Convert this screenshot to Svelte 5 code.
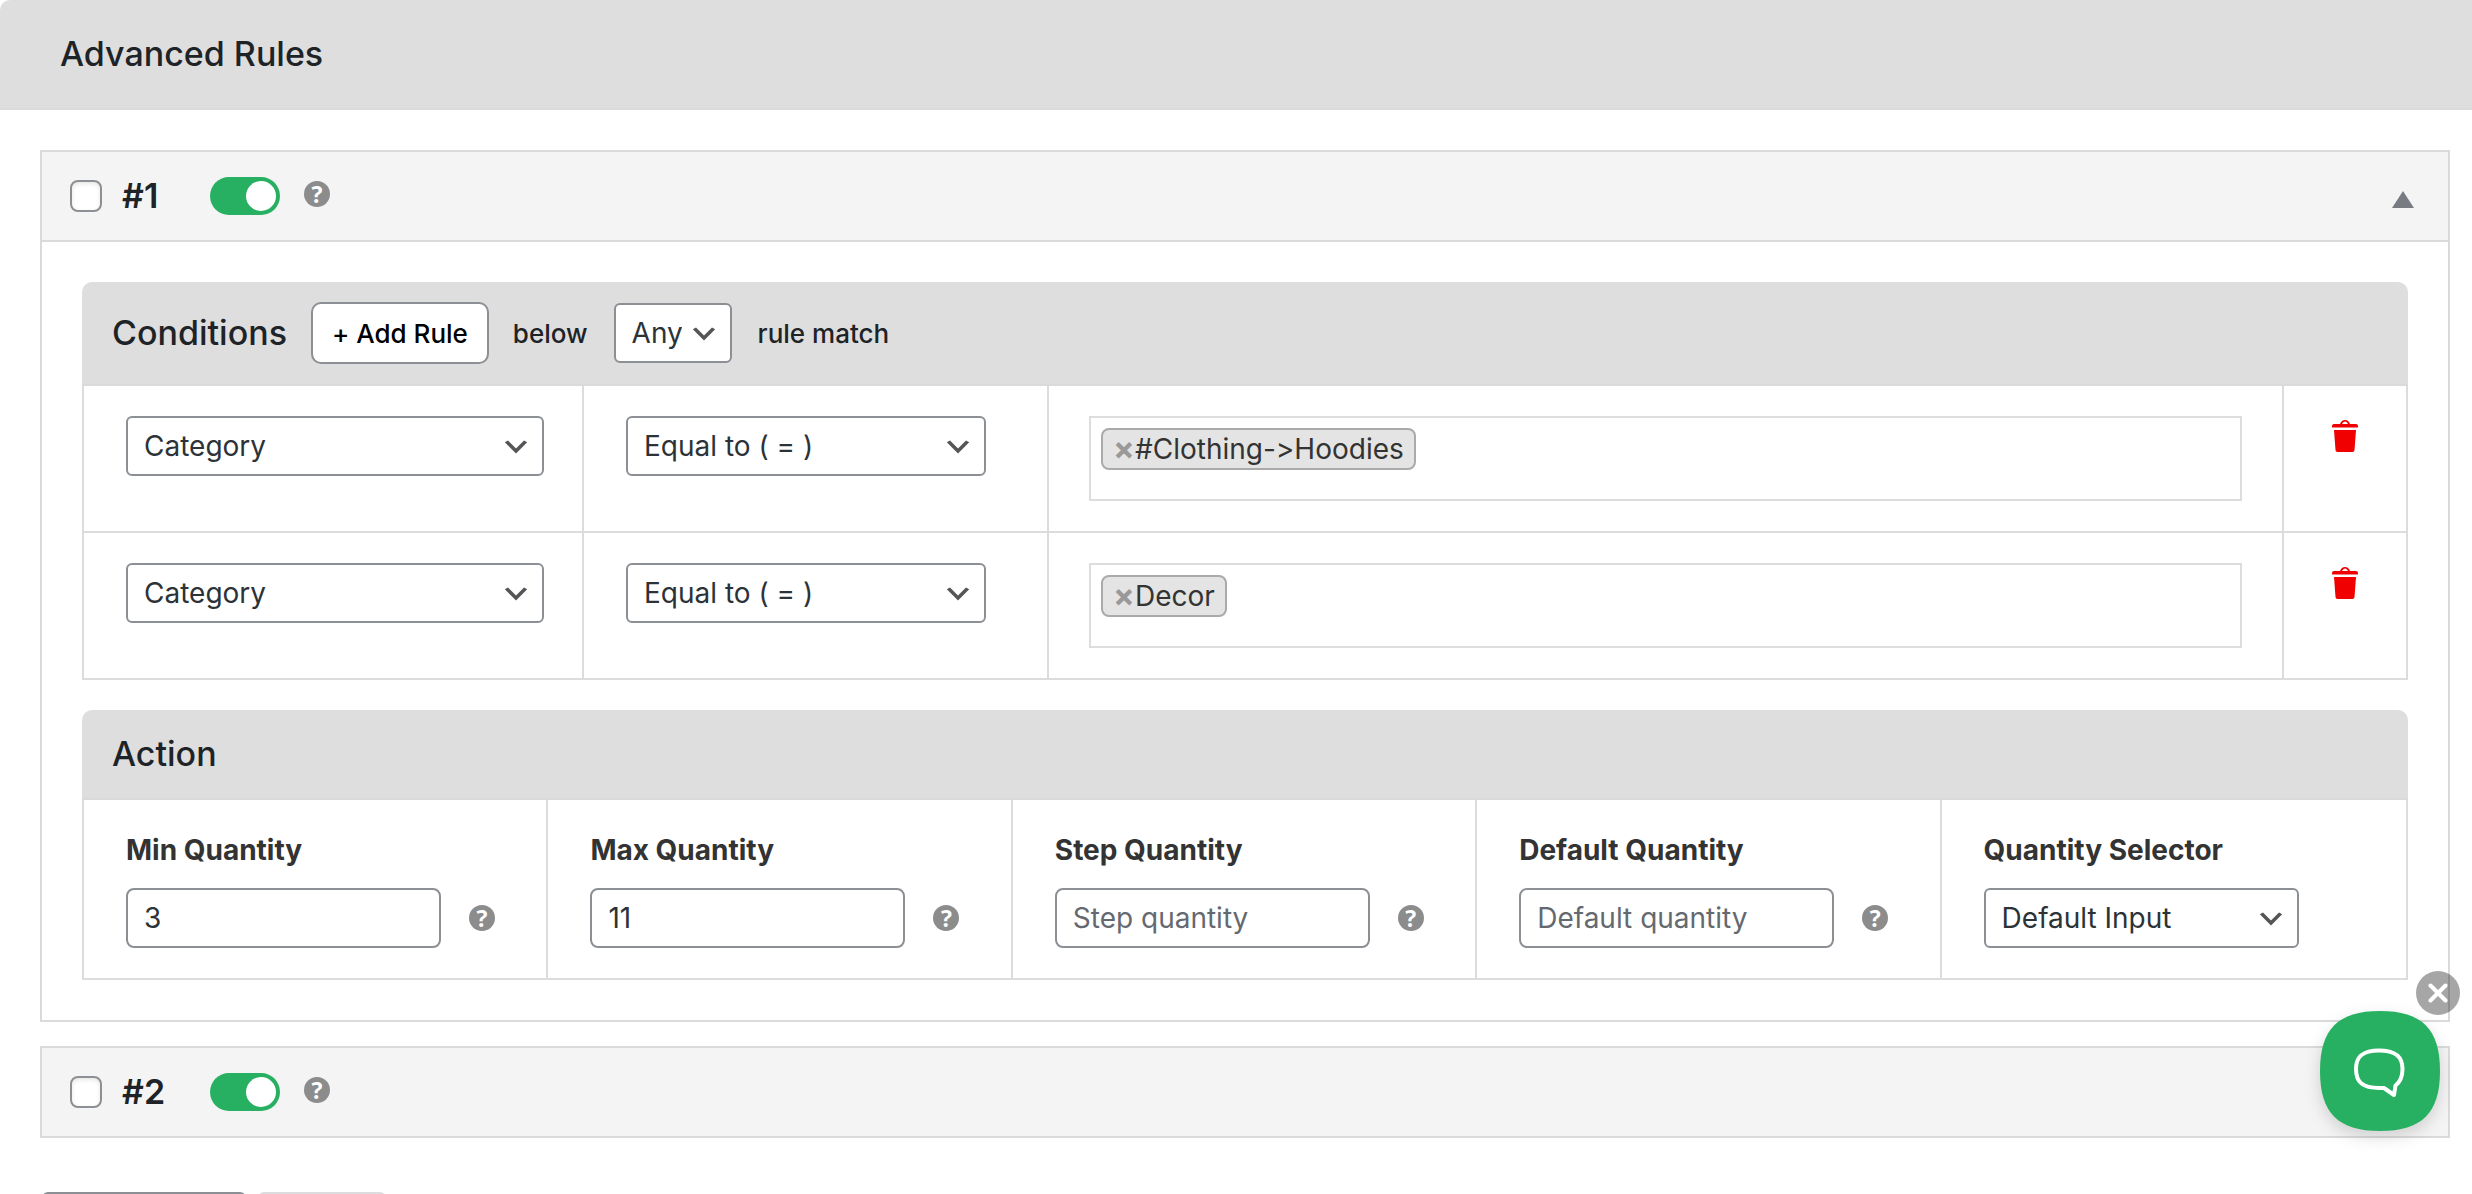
<script lang="ts">
  type Condition = { field: string; operator: string; tags: string[] };
  type Action = { id: string; label: string; value?: string; placeholder?: string; options?: string[] };

  export let conditions: Condition[] = [
    { field: 'Category', operator: 'Equal to ( = )', tags: ['#Clothing->Hoodies'] },
    { field: 'Category', operator: 'Equal to ( = )', tags: ['Decor'] },
  ];

  export let actions: Action[] = [
    { id: 'min', label: 'Min Quantity', value: '3' },
    { id: 'max', label: 'Max Quantity', value: '11' },
    { id: 'step', label: 'Step Quantity', value: '', placeholder: 'Step quantity' },
    { id: 'default', label: 'Default Quantity', value: '', placeholder: 'Default quantity' },
    { id: 'selector', label: 'Quantity Selector', options: ['Default Input'] },
  ];

  let rules = [
    { id: 1, checked: false, enabled: true, open: true },
    { id: 2, checked: false, enabled: true, open: false },
  ];
  let chatVisible = true;

  function addRule() {
    conditions = [...conditions, { field: 'Category', operator: 'Equal to ( = )', tags: [] }];
  }

  function removeRule(index: number) {
    conditions = conditions.filter((_, i) => i !== index);
  }

  function removeTag(index: number, tag: string) {
    conditions[index].tags = conditions[index].tags.filter((t) => t !== tag);
  }
</script>

<header class="page-header">
  <h1 class="heading">Advanced Rules</h1>
</header>

<main class="rules">
  {#each rules as rule (rule.id)}
    <section class="rule">
      <div class="rule__bar" class:rule__bar--open={rule.open}>
        <input class="check" type="checkbox" aria-label="Select rule {rule.id}" bind:checked={rule.checked} />
        <h2 class="heading rule__number">#{rule.id}</h2>
        <input class="toggle" type="checkbox" role="switch" aria-label="Enable rule {rule.id}" bind:checked={rule.enabled} />
        <button class="help help--bar" type="button" aria-label="Help">?</button>
        <button class="rule__collapse" type="button" aria-label="Toggle rule {rule.id}" on:click={() => (rule.open = !rule.open)}>
          <svg width="22" height="17" viewBox="0 0 22 17"><path d="M11 0 22 17H0z" fill="#787c82" /></svg>
        </button>
      </div>

      {#if rule.open}
        <div class="rule__body">
          <div class="box">
            <div class="box__header box__header--conditions">
              <h3 class="heading">Conditions</h3>
              <button class="add" type="button" on:click={addRule}>+ Add Rule</button>
              <label class="box__text" for="match-{rule.id}">below</label>
              <select class="field select select--match" id="match-{rule.id}">
                <option>Any</option>
                <option>All</option>
              </select>
              <span class="box__text">rule match</span>
            </div>

            {#each conditions as condition, i}
              <div class="condition">
                <div class="cell">
                  <select class="field select" aria-label="Condition field">
                    <option>{condition.field}</option>
                  </select>
                </div>
                <div class="cell">
                  <select class="field select select--operator" aria-label="Condition operator">
                    <option>{condition.operator}</option>
                  </select>
                </div>
                <div class="cell cell--tags">
                  <div class="tags">
                    {#each condition.tags as tag}
                      <span class="tag">
                        <button class="tag__remove" type="button" aria-label="Remove {tag}" on:click={() => removeTag(i, tag)}>×</button>{tag}
                      </span>
                    {/each}
                  </div>
                </div>
                <div class="cell cell--delete">
                  <button class="delete" type="button" aria-label="Delete condition" on:click={() => removeRule(i)}>
                    <svg width="26" height="32" viewBox="0 0 26 32" fill="#f00000">
                      <path d="M0 7.500V6Q0 4 2 4H8Q9.500 0 13 0t5 4h6q2 0 2 2V7.500z" />
                      <path d="M10 4Q11 1.500 13 1.500t3 2.500z" fill="#fff" />
                      <path d="M2 10H24L22.500 30Q22.300 32 20.500 32H5.500Q3.700 32 3.500 30z" />
                    </svg>
                  </button>
                </div>
              </div>
            {/each}
          </div>

          <div class="box">
            <div class="box__header">
              <h3 class="heading">Action</h3>
            </div>
            <div class="actions">
              {#each actions as action (action.id)}
                <div class="action">
                  <label class="action__label" for="{action.id}-{rule.id}">{action.label}</label>
                  <div class="action__control">
                    {#if action.options}
                      <select class="field select" id="{action.id}-{rule.id}">
                        {#each action.options as option}
                          <option>{option}</option>
                        {/each}
                      </select>
                    {:else}
                      <input class="field" type="text" id="{action.id}-{rule.id}" placeholder={action.placeholder} bind:value={action.value} />
                      <button class="help" type="button" aria-label="Help">?</button>
                    {/if}
                  </div>
                </div>
              {/each}
            </div>
          </div>
        </div>
      {/if}
    </section>
  {/each}
</main>

<footer class="footer">
  <button class="footer__button footer__button--wide" type="button" aria-label="Add new rule"></button>
  <button class="footer__button footer__button--muted" type="button" aria-label="Remove selected" disabled></button>
</footer>

{#if chatVisible}
  <div class="chat">
    <button class="chat__close" type="button" aria-label="Hide chat" on:click={() => (chatVisible = false)}>
      <svg width="20" height="20" viewBox="0 0 20 20"><path d="M2.500 2.500 17.500 17.500M17.500 2.500 2.500 17.500" stroke="#fff" stroke-width="4" stroke-linecap="round" /></svg>
    </button>
    <button class="chat__open" type="button" aria-label="Open chat">
      <svg width="120" height="120" viewBox="0 0 120 120">
        <path d="M60 0C102 0 120 18 120 60S102 120 60 120 0 102 0 60 18 0 60 0z" fill="#27b062" />
        <path
          d="M59 39.500C75 39.500 82.500 45 82.500 58C82.500 66 80 71 75.500 74.500L74 84L64 77H59C43 77 36 71.500 36 58C36 45 43 39.500 59 39.500z"
          fill="none" stroke="#fff" stroke-width="4" stroke-linejoin="round"
        />
      </svg>
    </button>
  </div>
{/if}

<style>
  :global(body) {
    background: #fff;
    color: #1d2327;
    font-family: Inter, "Liberation Sans", sans-serif;
    font-size: 28px;
    /* keeps "->" in category paths as typed */
    font-feature-settings: "calt" 0;
    height: 100vh;
    overflow: hidden;
  }
  button, input, select {
    box-sizing: border-box;
    margin: 0;
    font-family: inherit;
    font-feature-settings: inherit;
  }
  button { padding: 0; border: none; background: none; cursor: pointer; }
  svg { display: block; }

  .heading {
    margin: 0;
    font-size: 34px; font-weight: 500;
    line-height: 48px;
  }
  .page-header {
    padding: 30px 60px;
    background: #dedede;
    border-bottom: 2px solid #dadada;
    border-top-left-radius: 10px;
  }

  .rules {
    display: flex; flex-direction: column; gap: 24px;
    padding: 40px 22px 54px 40px;
  }
  .rule { border: 2px solid #dadada; }
  .rule__bar {
    display: flex; align-items: center;
    height: 88px;
    padding: 0 34px 0 28px;
    background: #f4f4f4;
  }
  .rule__bar--open { border-bottom: 2px solid #dadada; }
  .rule__number { width: 88px; margin-left: 20px; font-weight: 600; }
  .rule__collapse { margin: 6px 0 0 auto; }
  .rule__body {
    display: flex; flex-direction: column; gap: 30px;
    padding: 40px;
  }

  .check {
    appearance: none;
    width: 32px; height: 32px;
    border: 2px solid #8c8f94; border-radius: 8px;
    background: #fff;
    box-shadow: inset 0 2px 4px rgba(0, 0, 0, 0.1);
  }
  .toggle {
    appearance: none;
    width: 70px; height: 38px;
    padding: 4px;
    border-radius: 19px;
    background: #ccc;
  }
  .toggle::before {
    content: '';
    display: block;
    width: 30px; height: 30px;
    border-radius: 50%;
    background: #fff;
  }
  .toggle:checked { background: #27b062; }
  .toggle:checked::before { margin-left: auto; }

  .help {
    flex: none;
    width: 26px; height: 26px;
    border-radius: 50%;
    background: #8c8c8c;
    color: #fff;
    font-family: "Open Sans", sans-serif;
    font-size: 23px; font-weight: 700; line-height: 26px;
  }
  .help--bar { margin: 0 0 4px 24px; }

  .box__header {
    box-sizing: border-box;
    display: flex; align-items: center;
    height: 90px;
    padding: 0 30px;
    background: #dedede;
    border-bottom: 2px solid #dadada;
    border-radius: 10px 10px 0 0;
  }
  .box__header--conditions { height: 104px; }
  .box__text { font-size: 26px; font-weight: 500; }
  .add {
    height: 62px;
    margin: 0 24px;
    padding: 0 19px;
    border: 2px solid #8c8f94; border-radius: 10px;
    background: #fff;
    color: #000;
    font-size: 26px; font-weight: 500;
  }

  .field {
    width: 100%; height: 60px;
    padding: 0 16px;
    border: 2px solid #8c8f94; border-radius: 8px;
    background: #fff;
    color: #2c3338;
    font-size: 28px;
  }
  .field::placeholder { color: #646970; }
  .select {
    appearance: none;
    padding-right: 48px;
    border-radius: 6px;
    background: #fff url("data:image/svg+xml,%3Csvg xmlns='http://www.w3.org/2000/svg' viewBox='0 0 20 20'%3E%3Cpath d='M5 6l5 5 5-5 2 1-7 7-7-7 2-1z' fill='%23555'/%3E%3C/svg%3E") no-repeat right 10px top 55%;
    background-size: 32px 32px;
  }
  .select--match { width: 118px; margin: 0 26px; }
  .select--operator { width: 360px; }

  .condition {
    display: grid;
    grid-template-columns: 500px 465px 1fr 122px;
    border: 2px solid #dcdcdc; border-top: none;
  }
  .cell {
    padding: 30px 38px 30px 42px;
    border-right: 2px solid #dcdcdc;
  }
  .cell--tags { padding: 30px 40px; }
  .cell--delete {
    display: flex; justify-content: center; align-items: flex-start;
    padding: 34px 0;
    border-right: none;
  }
  .tags {
    box-sizing: border-box;
    display: flex; flex-wrap: wrap; align-items: flex-start; gap: 10px;
    min-height: 85px;
    padding: 10px;
    border: 2px solid #ddd;
  }
  .tag {
    box-sizing: border-box;
    display: flex; align-items: center;
    height: 42px;
    padding: 0 10px;
    border: 2px solid #aaa; border-radius: 8px;
    background: #e4e4e4;
    color: #333;
    line-height: 38px;
  }
  .tag__remove {
    width: 22px;
    color: #999;
    font-size: 32px; font-weight: 700; line-height: 38px;
    text-align: left;
  }

  .actions {
    display: grid; grid-template-columns: repeat(5, 1fr);
    border: 2px solid #dcdcdc; border-top: none;
  }
  .action {
    padding: 32px 40px 30px 42px;
    border-right: 2px solid #dcdcdc;
  }
  .action:last-child { border-right: none; }
  .action__label {
    display: block;
    margin-bottom: 20px;
    color: #333;
    font-weight: 700; line-height: 36px;
  }
  .action__control { display: flex; align-items: center; gap: 28px; }
  .action__control .field { width: 315px; }

  .footer { display: flex; gap: 12px; padding: 0 42px; }
  .footer__button {
    width: 128px; height: 60px;
    border: 2px solid #8c8f94; border-radius: 6px;
    background: #fff;
  }
  .footer__button--wide { width: 204px; }
  .footer__button--muted { border-color: #dcdcde; }

  .chat {
    position: fixed; right: 12px; bottom: 63px;
    display: flex; flex-direction: column; align-items: flex-end;
  }
  .chat__close {
    display: flex; align-items: center; justify-content: center;
    width: 44px; height: 44px;
    margin-bottom: -4px;
    border-radius: 50%;
    background: rgba(0, 0, 0, 0.35);
  }
  .chat__open {
    margin-right: 20px;
    filter: drop-shadow(0 6px 8px rgba(0, 0, 0, 0.15));
  }
</style>
